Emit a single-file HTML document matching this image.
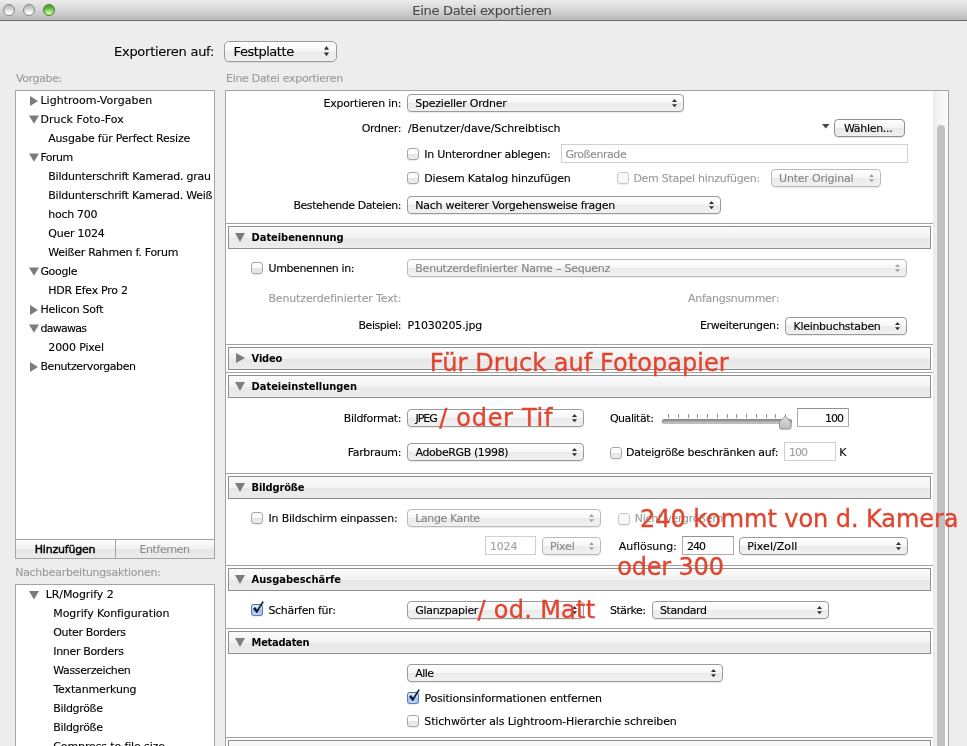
<!DOCTYPE html>
<html lang="de">
<head>
<meta charset="utf-8">
<title>Eine Datei exportieren</title>
<style>
html,body{margin:0;padding:0;}
body{width:967px;height:746px;overflow:hidden;background:#ededed;position:relative;
  font-family:"DejaVu Sans","Liberation Sans",sans-serif;font-size:11px;color:#000;}
#win{position:absolute;left:0;top:0;width:967px;height:746px;overflow:hidden;will-change:transform;}
.a{position:absolute;}
.t{position:absolute;white-space:nowrap;line-height:14px;font-size:11px;-webkit-text-stroke:0.12px currentColor;}
/* title bar */
#tb{position:absolute;left:0;top:0;width:967px;height:20px;
  background:linear-gradient(#ebebeb 0%,#d8d8d8 45%,#b9b9b9 100%);border-bottom:1px solid #6a6a6a;}
.tl{position:absolute;top:4px;width:12px;height:12px;border-radius:50%;box-sizing:border-box;
  border:1px solid #868686;background:radial-gradient(ellipse 70% 55% at 50% 88%,#ffffff 0%,rgba(255,255,255,0) 100%),linear-gradient(#b9b9b9 0%,#d8d8d8 55%,#f2f2f2 100%);}
.tl.gr{border-color:#3f7f2a;background:radial-gradient(ellipse 70% 55% at 50% 85%,#d2f7ae 0%,rgba(190,240,150,0) 100%),linear-gradient(#4a9a30 0%,#6cbd48 50%,#93d96c 100%);}
/* panels */
.panel{position:absolute;background:#fff;border:1px solid #a3a3a3;box-sizing:border-box;}
.tri-r{position:absolute;width:8px;height:10px;background:#7b7b7b;clip-path:polygon(0 0,100% 50%,0 100%);}
.tri-d{position:absolute;width:10px;height:8.4px;background:#7b7b7b;clip-path:polygon(0 0,100% 0,50% 100%);}
#btnbar{box-sizing:border-box;border:1px solid #a3a3a3;background:linear-gradient(#fcfcfc 0%,#f2f2f2 50%,#e6e6e6 52%,#ececec 100%);}
/* popups */
.pop{position:absolute;box-sizing:border-box;border:1px solid #9a9a9a;border-radius:4px;
  background:linear-gradient(#ffffff 0%,#f6f6f6 48%,#ebebeb 52%,#f1f1f1 100%);
  box-shadow:0 1px 0 rgba(0,0,0,.08);height:18px;}
.pop.big{height:21px;border-radius:5px;}
.pop.dis{border-color:#bababa;}
.pop .ar{position:absolute;right:6px;top:4px;width:5px;height:9px;}
.pop.big .ar{right:7px;top:4px;height:11px;}
.pop.big .ar:before{height:3.8px;}
.pop.big .ar:after{top:6.4px;height:3.8px;}
.pop .ar:before{content:"";position:absolute;left:0;top:0;width:5px;height:3.1px;background:#303030;clip-path:polygon(50% 0,100% 100%,0 100%);}
.pop .ar:after{content:"";position:absolute;left:0;top:5.2px;width:5px;height:3.1px;background:#303030;clip-path:polygon(0 0,100% 0,50% 100%);}
.pop.dis .ar:before{background:#a2a2a2;}
.pop.dis .ar:after{background:#a2a2a2;}
.btn{position:absolute;box-sizing:border-box;border:1px solid #8f8f8f;border-radius:4px;
  background:linear-gradient(#ffffff 0%,#f4f4f4 48%,#e8e8e8 52%,#efefef 100%);box-shadow:0 1px 0 rgba(0,0,0,.1);}
/* checkbox */
.cb{position:absolute;width:12px;height:12px;box-sizing:border-box;border:1px solid #a6a6a6;border-radius:3px;
  background:linear-gradient(#ffffff 0%,#fbfbfb 45%,#e6e6e6 55%,#ececec 100%);box-shadow:0 1px 0 rgba(0,0,0,.07);}
.cb.dis{border-color:#c9c9c9;background:#f8f8f8;}
.cb.chk{border-color:#5b7db4;border-top-color:#4f6fa6;background:linear-gradient(#e0ebf9 0%,#c2d8f4 48%,#9dc0ee 55%,#bcd8f7 100%);}
.cb.chk svg{position:absolute;left:-1px;top:-5px;overflow:visible;}
/* text field */
.tf{position:absolute;box-sizing:border-box;border:1px solid #cfcfcf;background:#fff;}
.tf.act{border-color:#acacac;border-top-color:#939393;}
/* section */
.sep{position:absolute;left:226px;width:707px;height:1px;background:#a2a2a2;}
.hdr{position:absolute;left:228px;width:703px;height:23px;box-sizing:border-box;border:1px solid #8e8e8e;
  background:linear-gradient(#fbfbfb 0%,#f2f2f2 50%,#e7e7e7 51%,#ececec 100%);}
.hdr .tri-d{left:6px;top:6px;width:10px;height:9px;background:#7c7c7c;}
.hdr .tri-r{left:7px;top:5px;width:9px;height:10px;background:#7c7c7c;}
</style>
</head>
<body>
<div id="win">
<div id="tb"><div class="tl" style="left:3px"></div><div class="tl" style="left:23px"></div><div class="tl gr" style="left:43px"></div></div>
<div class="t" style="left:412.30px;top:3px;font-size:13px;line-height:16px;letter-spacing:-0.310px;color:#4a4a4a;">Eine Datei exportieren</div>
<div class="t" style="left:114.00px;top:44.4px;font-size:13px;line-height:16px;letter-spacing:-0.263px;">Exportieren auf:</div>
<div class="pop big" style="left:224px;top:41px;width:113px;"><span class="ar"></span></div>
<div class="t" style="left:233.60px;top:44.4px;font-size:13px;line-height:16px;letter-spacing:-0.458px;">Festplatte</div>
<div class="t" style="left:15.90px;top:72px;letter-spacing:-0.354px;color:#9a9a9a;">Vorgabe:</div>
<div class="t" style="left:226.00px;top:72px;letter-spacing:-0.301px;color:#9a9a9a;">Eine Datei exportieren</div>
<div class="panel" style="left:15px;top:90px;width:200px;height:450px;"></div>
<div class="tri-r" style="left:30px;top:96px"></div>
<div class="t" style="left:40.40px;top:94px;letter-spacing:0.025px;">Lightroom-Vorgaben</div>
<div class="tri-d" style="left:29px;top:115.4px"></div>
<div class="t" style="left:40.40px;top:113px;letter-spacing:0.052px;">Druck Foto-Fox</div>
<div class="t" style="left:48.30px;top:132px;letter-spacing:-0.215px;">Ausgabe für Perfect Resize</div>
<div class="tri-d" style="left:29px;top:153.4px"></div>
<div class="t" style="left:40.40px;top:151px;letter-spacing:-0.494px;">Forum</div>
<div class="t" style="left:48.30px;top:170px;letter-spacing:-0.243px;">Bildunterschrift Kamerad. grau</div>
<div class="t" style="left:48.30px;top:189px;letter-spacing:-0.255px;">Bildunterschrift Kamerad. Weiß</div>
<div class="t" style="left:48.30px;top:208px;letter-spacing:-0.293px;">hoch 700</div>
<div class="t" style="left:48.30px;top:227px;letter-spacing:-0.247px;">Quer 1024</div>
<div class="t" style="left:48.30px;top:246px;letter-spacing:-0.264px;">Weißer Rahmen f. Forum</div>
<div class="tri-d" style="left:29px;top:267.4px"></div>
<div class="t" style="left:40.40px;top:265px;letter-spacing:-0.330px;">Google</div>
<div class="t" style="left:48.30px;top:284px;letter-spacing:-0.273px;">HDR Efex Pro 2</div>
<div class="tri-r" style="left:30px;top:305px"></div>
<div class="t" style="left:40.40px;top:303px;letter-spacing:-0.275px;">Helicon Soft</div>
<div class="tri-d" style="left:29px;top:324.4px"></div>
<div class="t" style="left:40.40px;top:322px;letter-spacing:-0.712px;">dawawas</div>
<div class="t" style="left:48.30px;top:341px;letter-spacing:-0.131px;">2000 Pixel</div>
<div class="tri-r" style="left:30px;top:362px"></div>
<div class="t" style="left:40.40px;top:360px;letter-spacing:-0.402px;">Benutzervorgaben</div>
<div class="a" id="btnbar" style="left:15px;top:539px;width:200px;height:20px;"><div class="a" style="left:99px;top:0;width:1px;height:18px;background:#a3a3a3"></div></div>
<div class="t" style="left:34.80px;top:543px;letter-spacing:-0.203px;-webkit-text-stroke:0.45px #000;">Hinzufügen</div>
<div class="t" style="left:139.50px;top:543px;letter-spacing:-0.422px;color:#8f8f8f;">Entfernen</div>
<div class="t" style="left:15.20px;top:566px;letter-spacing:-0.282px;color:#9a9a9a;">Nachbearbeitungsaktionen:</div>
<div class="panel" style="left:15px;top:584px;width:200px;height:180px;"></div>
<div class="tri-d" style="left:29px;top:591px"></div>
<div class="t" style="left:45.70px;top:588px;letter-spacing:-0.091px;">LR/Mogrify 2</div>
<div class="t" style="left:53.30px;top:607px;letter-spacing:-0.095px;">Mogrify Konfiguration</div>
<div class="t" style="left:53.30px;top:626px;letter-spacing:-0.381px;">Outer Borders</div>
<div class="t" style="left:53.30px;top:645px;letter-spacing:-0.335px;">Inner Borders</div>
<div class="t" style="left:53.30px;top:664px;letter-spacing:-0.375px;">Wasserzeichen</div>
<div class="t" style="left:53.42px;top:683px;letter-spacing:-0.150px;">Textanmerkung</div>
<div class="t" style="left:53.30px;top:702px;letter-spacing:-0.334px;">Bildgröße</div>
<div class="t" style="left:53.30px;top:721px;letter-spacing:-0.334px;">Bildgröße</div>
<div class="t" style="left:53.30px;top:740px;letter-spacing:-0.127px;">Compress to file size</div>
<div class="panel" style="left:225px;top:90px;width:724px;height:680px;"></div>
<div class="a" style="left:933px;top:91px;width:15px;height:660px;background:linear-gradient(90deg,#e9e9e9 0%,#f4f4f4 35%,#fbfbfb 100%);"></div>
<div class="a" style="left:937px;top:125px;width:8px;height:640px;border-radius:4px;background:#c1c1c1"></div>
<div class="t" style="left:323.50px;top:97px;letter-spacing:-0.223px;">Exportieren in:</div>
<div class="pop" style="left:407px;top:94px;width:277px;"><span class="ar"></span></div>
<div class="t" style="left:415.30px;top:97px;letter-spacing:-0.245px;">Spezieller Ordner</div>
<div class="t" style="left:361.70px;top:122px;letter-spacing:-0.325px;">Ordner:</div>
<div class="t" style="left:408.00px;top:122px;letter-spacing:-0.096px;">/Benutzer/dave/Schreibtisch</div>
<div class="a" style="left:822px;top:124px;width:7.5px;height:4.5px;background:#484848;clip-path:polygon(0 0,100% 0,50% 100%)"></div>
<div class="btn" style="left:834px;top:119px;width:71px;height:18px;"></div>
<div class="t" style="left:844.00px;top:121.5px;letter-spacing:-0.316px;">Wählen...</div>
<div class="cb" style="left:407px;top:148px"></div>
<div class="t" style="left:424.30px;top:148px;letter-spacing:-0.253px;">In Unterordner ablegen:</div>
<div class="tf" style="left:561px;top:144px;width:347px;height:19px;"></div>
<div class="t" style="left:565.40px;top:148px;letter-spacing:-0.439px;color:#8f8f8f;">Großenrade</div>
<div class="cb" style="left:407px;top:172px"></div>
<div class="t" style="left:424.30px;top:172px;letter-spacing:-0.207px;">Diesem Katalog hinzufügen</div>
<div class="cb dis" style="left:617px;top:172px"></div>
<div class="t" style="left:633.40px;top:172px;letter-spacing:-0.283px;color:#9a9a9a;">Dem Stapel hinzufügen:</div>
<div class="pop dis" style="left:771px;top:169px;width:110px;"><span class="ar"></span></div>
<div class="t" style="left:779.10px;top:172px;letter-spacing:-0.210px;color:#858585;">Unter Original</div>
<div class="t" style="left:293.40px;top:199px;letter-spacing:-0.432px;">Bestehende Dateien:</div>
<div class="pop" style="left:407px;top:196px;width:314px;"><span class="ar"></span></div>
<div class="t" style="left:415.30px;top:199px;letter-spacing:-0.271px;">Nach weiterer Vorgehensweise fragen</div>
<div class="sep" style="top:223px"></div>
<div class="hdr" style="top:226px"><div class="tri-d"></div></div>
<div class="t" style="left:251.60px;top:231px;font-weight:bold;-webkit-text-stroke:0;font-family:'DejaVu Sans Condensed','DejaVu Sans','Liberation Sans',sans-serif;letter-spacing:-0.040px;">Dateibenennung</div>
<div class="cb" style="left:251px;top:262px"></div>
<div class="t" style="left:268.50px;top:262px;letter-spacing:-0.402px;">Umbenennen in:</div>
<div class="pop dis" style="left:407px;top:259px;width:500px;"><span class="ar"></span></div>
<div class="t" style="left:415.30px;top:262px;letter-spacing:-0.235px;color:#858585;">Benutzerdefinierter Name – Sequenz</div>
<div class="t" style="left:268.40px;top:292px;letter-spacing:-0.142px;color:#9a9a9a;">Benutzerdefinierter Text:</div>
<div class="t" style="left:688.00px;top:292px;letter-spacing:-0.277px;color:#9a9a9a;">Anfangsnummer:</div>
<div class="t" style="left:358.50px;top:319px;letter-spacing:-0.453px;">Beispiel:</div>
<div class="t" style="left:407.60px;top:319px;letter-spacing:-0.130px;">P1030205.jpg</div>
<div class="t" style="left:700.00px;top:319px;letter-spacing:-0.373px;">Erweiterungen:</div>
<div class="pop" style="left:785px;top:317px;width:122px;"><span class="ar"></span></div>
<div class="t" style="left:793.50px;top:320px;letter-spacing:-0.300px;">Kleinbuchstaben</div>
<div class="sep" style="top:344px"></div>
<div class="hdr" style="top:347px"><div class="tri-r"></div></div>
<div class="t" style="left:251.60px;top:352px;font-weight:bold;-webkit-text-stroke:0;font-family:'DejaVu Sans Condensed','DejaVu Sans','Liberation Sans',sans-serif;letter-spacing:-0.175px;">Video</div>
<div class="sep" style="top:372px"></div>
<div class="hdr" style="top:375px"><div class="tri-d"></div></div>
<div class="t" style="left:251.60px;top:380px;font-weight:bold;-webkit-text-stroke:0;font-family:'DejaVu Sans Condensed','DejaVu Sans','Liberation Sans',sans-serif;letter-spacing:-0.029px;">Dateieinstellungen</div>
<div class="t" style="left:343.70px;top:412px;letter-spacing:-0.320px;">Bildformat:</div>
<div class="pop" style="left:407px;top:409px;width:177px;"><span class="ar"></span></div>
<div class="t" style="left:415.62px;top:412px;letter-spacing:-1.067px;">JPEG</div>
<div class="t" style="left:609.90px;top:412px;letter-spacing:-0.450px;">Qualität:</div>
<div class="a" style="left:668.00px;top:414px;width:1px;height:4px;background:#8e8e8e"></div>
<div class="a" style="left:677.75px;top:414px;width:1px;height:4px;background:#8e8e8e"></div>
<div class="a" style="left:687.50px;top:414px;width:1px;height:4px;background:#8e8e8e"></div>
<div class="a" style="left:697.25px;top:414px;width:1px;height:4px;background:#8e8e8e"></div>
<div class="a" style="left:707.00px;top:414px;width:1px;height:4px;background:#8e8e8e"></div>
<div class="a" style="left:716.75px;top:414px;width:1px;height:4px;background:#8e8e8e"></div>
<div class="a" style="left:726.50px;top:414px;width:1px;height:4px;background:#8e8e8e"></div>
<div class="a" style="left:736.25px;top:414px;width:1px;height:4px;background:#8e8e8e"></div>
<div class="a" style="left:746.00px;top:414px;width:1px;height:4px;background:#8e8e8e"></div>
<div class="a" style="left:755.75px;top:414px;width:1px;height:4px;background:#8e8e8e"></div>
<div class="a" style="left:765.50px;top:414px;width:1px;height:4px;background:#8e8e8e"></div>
<div class="a" style="left:775.25px;top:414px;width:1px;height:4px;background:#8e8e8e"></div>
<div class="a" style="left:785.00px;top:414px;width:1px;height:4px;background:#8e8e8e"></div>
<div class="a" style="left:662px;top:419px;width:130px;height:5px;border-radius:2.5px;background:linear-gradient(#8a8a8a,#c9c9c9);box-sizing:border-box;border:1px solid #858585;border-bottom-color:#bdbdbd"></div>
<svg class="a" style="left:778px;top:415px" width="15" height="16" viewBox="0 0 15 16"><defs><linearGradient id="kg" x1="0" y1="0" x2="0" y2="1"><stop offset="0" stop-color="#dedede"/><stop offset="1" stop-color="#bdbdbd"/></linearGradient></defs><path d="M7.3 1.2 L13.1 6.8 L13.1 12.4 Q13.1 14.1 11.4 14.1 L3.2 14.1 Q1.5 14.1 1.5 12.4 L1.5 6.8 Z" fill="url(#kg)" stroke="#878787" stroke-width="0.9"/></svg>
<div class="tf act" style="left:797px;top:408px;width:52px;height:19px;"></div>
<div class="t" style="left:825.00px;top:412px;letter-spacing:-1.000px;">100</div>
<div class="t" style="left:347.70px;top:445.5px;letter-spacing:-0.306px;">Farbraum:</div>
<div class="pop" style="left:407px;top:443px;width:177px;"><span class="ar"></span></div>
<div class="t" style="left:415.50px;top:446px;letter-spacing:-0.395px;">AdobeRGB (1998)</div>
<div class="cb" style="left:610px;top:447px"></div>
<div class="t" style="left:626.00px;top:445.7px;letter-spacing:-0.268px;">Dateigröße beschränken auf:</div>
<div class="tf" style="left:784px;top:442px;width:52px;height:19px;"></div>
<div class="t" style="left:789.00px;top:445.7px;letter-spacing:-1.000px;color:#a0a0a0;">100</div>
<div class="t" style="left:839.30px;top:445.7px;">K</div>
<div class="sep" style="top:473px"></div>
<div class="hdr" style="top:476px"><div class="tri-d"></div></div>
<div class="t" style="left:251.60px;top:481px;font-weight:bold;-webkit-text-stroke:0;font-family:'DejaVu Sans Condensed','DejaVu Sans','Liberation Sans',sans-serif;letter-spacing:-0.137px;">Bildgröße</div>
<div class="cb" style="left:251px;top:512px"></div>
<div class="t" style="left:268.60px;top:512px;letter-spacing:-0.223px;">In Bildschirm einpassen:</div>
<div class="pop dis" style="left:407px;top:509px;width:194px;"><span class="ar"></span></div>
<div class="t" style="left:415.30px;top:512px;letter-spacing:-0.407px;color:#858585;">Lange Kante</div>
<div class="cb dis" style="left:618px;top:513px"></div>
<div class="t" style="left:634.80px;top:512px;letter-spacing:-0.283px;color:#9a9a9a;">Nicht vergrößern</div>
<div class="tf" style="left:485px;top:536px;width:51px;height:19px;"></div>
<div class="t" style="left:490.00px;top:539.8px;letter-spacing:-0.200px;color:#a0a0a0;">1024</div>
<div class="pop dis" style="left:542px;top:537px;width:59px;"><span class="ar"></span></div>
<div class="t" style="left:550.00px;top:540px;letter-spacing:-0.175px;color:#858585;">Pixel</div>
<div class="t" style="left:618.80px;top:539.8px;letter-spacing:-0.056px;">Auflösung:</div>
<div class="tf act" style="left:682px;top:536px;width:52px;height:19px;"></div>
<div class="t" style="left:686.90px;top:539.9px;letter-spacing:-1.000px;">240</div>
<div class="pop" style="left:739px;top:537px;width:169px;"><span class="ar"></span></div>
<div class="t" style="left:747.30px;top:540px;letter-spacing:0.056px;">Pixel/Zoll</div>
<div class="sep" style="top:565px"></div>
<div class="hdr" style="top:568px"><div class="tri-d"></div></div>
<div class="t" style="left:251.60px;top:573px;font-weight:bold;-webkit-text-stroke:0;font-family:'DejaVu Sans Condensed','DejaVu Sans','Liberation Sans',sans-serif;letter-spacing:-0.008px;">Ausgabeschärfe</div>
<div class="cb chk" style="left:251px;top:604px"><svg viewBox="0 0 14 15" width="14" height="15"><path d="M2.3 8.7 L5.9 13.1 L12.5 2.0 L11.5 1.5 L6.1 10.0 L4.1 7.3 Z" fill="#0c1832" stroke="#0c1832" stroke-width="0.5" stroke-linejoin="round"/></svg></div>
<div class="t" style="left:268.40px;top:603.8px;letter-spacing:-0.312px;">Schärfen für:</div>
<div class="pop" style="left:407px;top:601px;width:177px;"><span class="ar"></span></div>
<div class="t" style="left:415.30px;top:604px;letter-spacing:-0.305px;">Glanzpapier</div>
<div class="t" style="left:610.00px;top:603.8px;letter-spacing:-0.500px;">Stärke:</div>
<div class="pop" style="left:652px;top:601px;width:177px;"><span class="ar"></span></div>
<div class="t" style="left:660.00px;top:604px;letter-spacing:-0.443px;">Standard</div>
<div class="sep" style="top:628px"></div>
<div class="hdr" style="top:631px"><div class="tri-d"></div></div>
<div class="t" style="left:251.60px;top:636px;font-weight:bold;-webkit-text-stroke:0;font-family:'DejaVu Sans Condensed','DejaVu Sans','Liberation Sans',sans-serif;letter-spacing:-0.281px;">Metadaten</div>
<div class="pop" style="left:407px;top:664px;width:316px;"><span class="ar"></span></div>
<div class="t" style="left:415.30px;top:667px;letter-spacing:-0.525px;">Alle</div>
<div class="cb chk" style="left:407px;top:692px"><svg viewBox="0 0 14 15" width="14" height="15"><path d="M2.3 8.7 L5.9 13.1 L12.5 2.0 L11.5 1.5 L6.1 10.0 L4.1 7.3 Z" fill="#0c1832" stroke="#0c1832" stroke-width="0.5" stroke-linejoin="round"/></svg></div>
<div class="t" style="left:424.40px;top:692px;letter-spacing:-0.174px;">Positionsinformationen entfernen</div>
<div class="cb" style="left:407px;top:715px"></div>
<div class="t" style="left:424.30px;top:715px;letter-spacing:-0.150px;">Stichwörter als Lightroom-Hierarchie schreiben</div>
<div class="sep" style="top:737px"></div>
<div class="hdr" style="top:740px"><div class="tri-d"></div></div>
<div class="t" style="left:429.80px;top:349.3px;font-size:24px;line-height:28px;letter-spacing:0.050px;color:#e1452f;-webkit-text-stroke:0.35px #e1452f;">Für Druck auf Fotopapier</div>
<div class="t" style="left:439.30px;top:403.8px;font-size:24px;line-height:28px;letter-spacing:0.678px;color:#e1452f;-webkit-text-stroke:0.35px #e1452f;">/ oder Tif</div>
<div class="t" style="left:640.00px;top:505px;font-size:24px;line-height:28px;letter-spacing:-0.067px;color:#e1452f;-webkit-text-stroke:0.35px #e1452f;">240 kommt von d. Kamera</div>
<div class="t" style="left:617.20px;top:553px;font-size:24px;line-height:28px;letter-spacing:-0.171px;color:#e1452f;-webkit-text-stroke:0.35px #e1452f;">oder 300</div>
<div class="t" style="left:477.60px;top:595.6px;font-size:24px;line-height:28px;letter-spacing:0.275px;color:#e1452f;-webkit-text-stroke:0.35px #e1452f;">/ od. Matt</div>
</div>
</body>
</html>
